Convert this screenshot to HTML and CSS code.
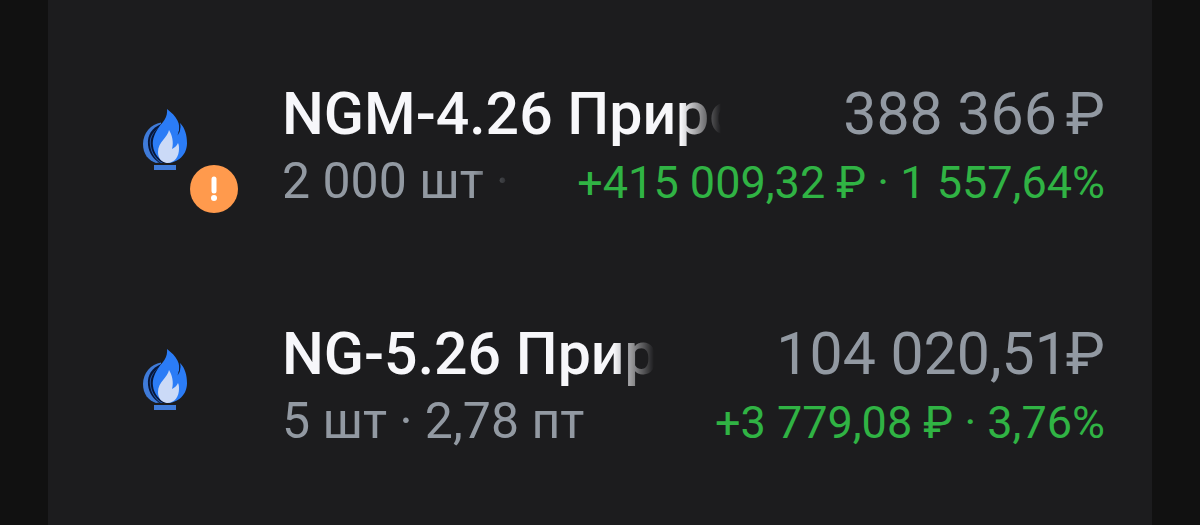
FILE: index.html
```html
<!DOCTYPE html>
<html lang="ru">

<head>
    <meta charset="UTF-8" />
    <meta name="viewport" content="width=device-width, initial-scale=1.0" />
    <title>Портфель</title>
    <link rel="stylesheet" href="styles.css">
</head>

<body>
    <svg width="0" height="0" class="defs">
        <symbol id="flame" viewBox="0 0 44 62">
            <!-- back layers of the flame -->
            <path fill="#3f7bd9" d="M18 13.500C8 15 0 24 0 35c0 10 5 16 13 19l6-1z" />
            <path fill="#071638" d="M18 15C9 19 4 26 5 36c1 8 5 14 12 18h8z" />
            <path fill="#2458ab" d="M15 19C9 24 6 29 7 36c1 8 5 14 11 18h5z" />
            <path fill="#071638" d="M15 19C9 25 7 30 8 37c1 7 5 13 12 17h6z" />
            <!-- front layer -->
            <path fill="#2b7cf6" d="M24 0c1 8-4 13-8 18-4 6-7 12-6 19 1 8 6 14 14 17 11 0 20-8 20-20 0-8-2-15-7-20 1 5 0 9-2 12C39 14 33 7 24 0z" />
            <path fill="#0a1d45" d="M37 14c1 6-1 10-3 13 2-4 3-8 2-12z" />
            <path fill="#cbdaf7" d="M26 21c-1 7-11 12-11 22 0 6 3 10 9 11 8 0 12-7 12-14 0-2 0-4-1-6-1 3-4 5-6 6 2-7 0-14-3-19z" />
            <path fill="#3f7bd9" d="M11 56h22v5H11z" />
        </symbol>
    </svg>
    <main class="card">
        <ul class="positions">
            <li class="row">
                <div class="avatar">
                    <svg class="flame"><use href="#flame" /></svg>
                    <svg class="badge" viewBox="0 0 48 48">
                        <circle cx="24" cy="24" r="24" fill="#ff9a4d" />
                        <path d="M24 14v12" stroke="#fff" stroke-width="5" stroke-linecap="round" />
                        <circle cx="24" cy="33" r="3" fill="#fff" />
                    </svg>
                </div>
                <div class="info">
                    <div class="line main">
                        <div class="name fade">NGM-4.26 Природный газ</div>
                        <div class="price"><span>388 366</span><span class="currency">₽</span></div>
                    </div>
                    <div class="line sub">
                        <div class="amount fade">2 000 шт · 3,12 пт</div>
                        <div class="profit">+415 009,32 ₽ · 1 557,64%</div>
                    </div>
                </div>
            </li>
            <li class="row">
                <div class="avatar">
                    <svg class="flame"><use href="#flame" /></svg>
                </div>
                <div class="info">
                    <div class="line main">
                        <div class="name fade">NG-5.26 Природный газ</div>
                        <div class="price"><span>104 020,51</span><span class="currency tight">₽</span></div>
                    </div>
                    <div class="line sub">
                        <div class="amount">5 шт · 2,78 пт</div>
                        <div class="profit">+3 779,08 ₽ · 3,76%</div>
                    </div>
                </div>
            </li>
        </ul>
    </main>
</body>

</html>
```

FILE: styles.css
```css
* {
    box-sizing: border-box;
    margin: 0;
    padding: 0;
}

body {
    background-color: #111111;
    color: #f7f7fa;
    font-family: Roboto, sans-serif;
    min-height: 100vh;
    display: flex;
}

.defs {
    position: absolute;
}

.card {
    background-color: #1c1c1e;
    flex: 1;
    min-width: 0;
    margin: 0 4vw;
    padding: 21px 47px 0 44px;
}

.positions {
    list-style: none;
}

.row {
    display: flex;
    align-items: flex-end;
    gap: 44px;
    padding: 46px 0 48px;
}

.avatar {
    position: relative;
    display: flex;
    align-items: center;
    justify-content: center;
    flex: none;
    width: 146px;
    height: 146px;
}

.flame {
    width: 44px;
    height: 62px;
}

.badge {
    position: absolute;
    right: 0;
    bottom: 0;
    width: 48px;
    height: 48px;
}

.info {
    flex: 1;
    min-width: 0;
}

.line {
    display: flex;
    justify-content: space-between;
    white-space: nowrap;
}

.main {
    gap: 122px;
    font-size: 59px;
    line-height: 74px;
}

.sub {
    align-items: baseline;
    gap: 64px;
    font-size: 50px;
    line-height: 60px;
}

.name {
    font-weight: 500;
}

.name,
.amount {
    min-width: 0;
    overflow: hidden;
}

.fade {
    -webkit-mask-image: linear-gradient(to left, transparent, #000 40px);
    mask-image: linear-gradient(to left, transparent, #000 40px);
}

.price,
.amount {
    color: #9299a2;
}

.price {
    display: flex;
    flex: none;
}

.currency {
    margin-left: 9px;
}

.currency.tight {
    margin-left: -2px;
}

.profit {
    flex: none;
    color: #30b344;
    font-size: 45px;
}
```
